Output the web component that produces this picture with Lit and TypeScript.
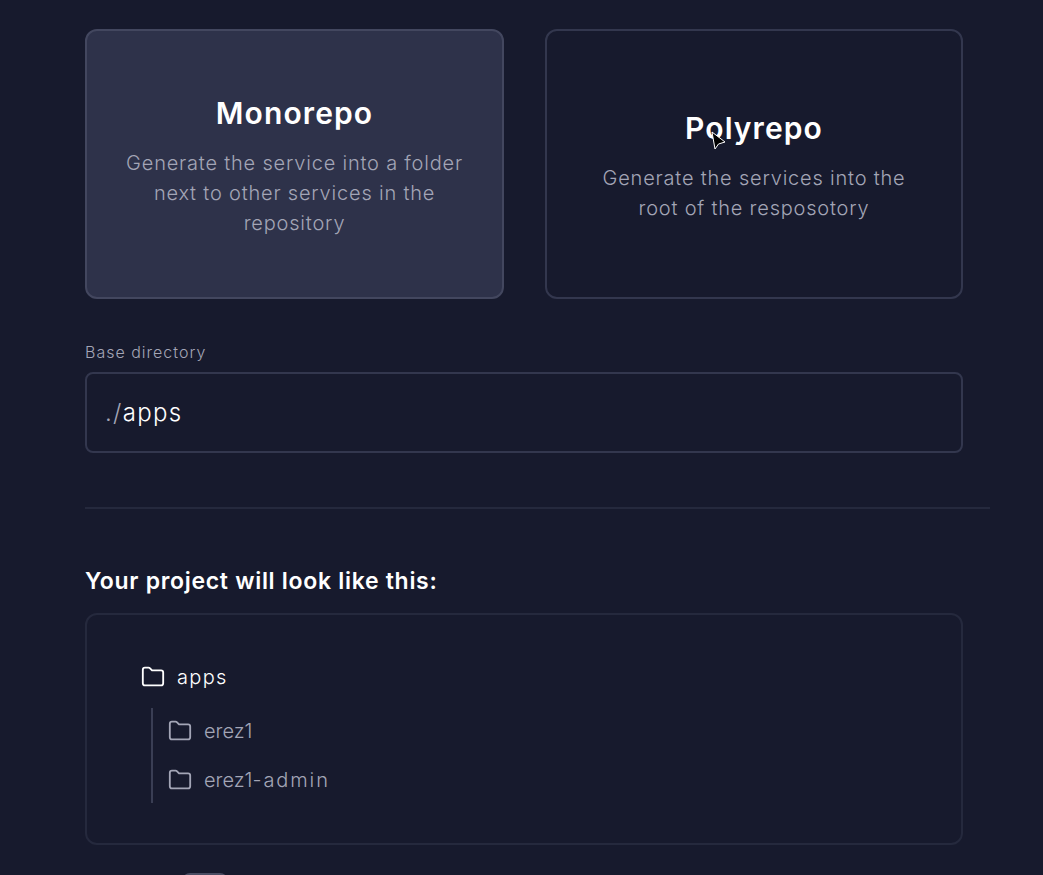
import { LitElement, html, css, svg } from 'lit';
import { customElement } from 'lit/decorators.js';

const folder = svg`<path d="M2.600 5.400c0-1.100.9-2 2-2h3.300c.5 0 1 .2 1.400.6l1.800 1.900h8.300c1.100 0 2 .9 2 2v9.800c0 1.100-.9 2-2 2H4.600c-1.100 0-2-.9-2-2z" fill="none" stroke="currentColor" stroke-width="1.700" stroke-linejoin="round"/>`;

@customElement('app-root')
export class AppRoot extends LitElement {
  static styles = css`
    :host {
      display: block;
      height: 875px;
      overflow: hidden;
      position: relative;
      background: #171a2d;
      font-family: 'Inter', 'Open Sans', sans-serif;
      color: #fff;
    }

    .page {
      display: flex;
      flex-direction: column;
      padding: 29px 53px 0 85px;
    }

    .main {
      width: 878px;
    }

    .cards {
      display: grid;
      grid-template-columns: 419px 418px;
      gap: 41px;
    }

    .card {
      box-sizing: border-box;
      height: 270px;
      border: 2px solid #33374e;
      border-radius: 12px;
      display: flex;
      flex-direction: column;
      align-items: center;
      justify-content: center;
      text-align: center;
      padding: 2px 30px 0;
    }

    .card.active {
      background: #2e324a;
      border-color: #43475f;
    }

    .card h2 {
      margin: 0 0 14px;
      font-size: 30px;
      line-height: 42px;
      font-weight: 600;
      letter-spacing: 1.1px;
    }

    .card p {
      margin: 0;
      max-width: 345px;
      font-size: 20px;
      line-height: 30px;
      font-weight: 300;
      letter-spacing: 0.8px;
      color: #a3a5b6;
    }

    label {
      display: block;
      margin-top: 41px;
      font-size: 16px;
      line-height: 24px;
      font-weight: 300;
      letter-spacing: 1px;
      color: #a3a5b6;
    }

    .input {
      box-sizing: border-box;
      height: 81px;
      margin-top: 8px;
      padding: 0 18px;
      display: flex;
      align-items: center;
      border: 2px solid #33374e;
      border-radius: 8px;
      font-size: 24px;
      font-weight: 300;
      letter-spacing: 1.3px;
    }

    .input span {
      color: #a3a5b6;
    }

    .divider {
      width: 905px;
      height: 2px;
      margin-top: 54px;
      background: #25293d;
    }

    h3 {
      margin: 54px 0 0;
      font-size: 23px;
      line-height: 36px;
      font-weight: 600;
      letter-spacing: 0.7px;
    }

    .tree {
      box-sizing: border-box;
      height: 232px;
      margin-top: 14px;
      padding: 44px 0 0 53px;
      border: 2px solid #25293d;
      border-radius: 12px;
    }

    .row {
      display: flex;
      align-items: center;
      gap: 11px;
      height: 36px;
      font-size: 20px;
      font-weight: 300;
      letter-spacing: 1.3px;
    }

    .row svg {
      width: 26px;
      height: 26px;
      flex: none;
    }

    .children {
      margin: 13px 0 0 11px;
      padding: 5px 0 5px 14px;
      border-left: 2px solid #3a3e54;
      display: flex;
      flex-direction: column;
      gap: 13px;
      color: #a3a5b6;
      letter-spacing: 0;
    }

    .children .row {
      letter-spacing: 0;
    }

    .suffix {
      letter-spacing: 1.9px;
    }

    .stub {
      box-sizing: border-box;
      width: 46px;
      height: 20px;
      margin: 28px 0 0 97px;
      border: 2px solid #4a4d63;
      border-radius: 8px;
    }

    .cursor {
      position: absolute;
      left: 710px;
      top: 129px;
      width: 17px;
      height: 22px;
    }
  `;

  render() {
    return html`
      <div class="page">
        <div class="main">
          <div class="cards">
            <div class="card active">
              <h2>Monorepo</h2>
              <p>Generate the service into a folder next to other services in the repository</p>
            </div>
            <div class="card">
              <h2>Polyrepo</h2>
              <p>Generate the services into the root of the resposotory</p>
            </div>
          </div>
          <label>Base directory</label>
          <div class="input"><span>./</span>apps</div>
          <div class="divider"></div>
          <h3>Your project will look like this:</h3>
          <div class="tree">
            <div class="row"><svg viewBox="0 0 24 24">${folder}</svg><div>apps</div></div>
            <div class="children">
              <div class="row"><svg viewBox="0 0 24 24">${folder}</svg><div>erez1</div></div>
              <div class="row"><svg viewBox="0 0 24 24">${folder}</svg><div>erez1<span class="suffix">-admin</span></div></div>
            </div>
          </div>
          <div class="stub"></div>
        </div>
      </div>
      <svg class="cursor" viewBox="0 0 17 22">
        <path d="M2 3l13 10-6.500 2L5 20z" fill="#000" stroke="#fff" stroke-width="1" stroke-linejoin="round"/>
      </svg>
    `;
  }
}
